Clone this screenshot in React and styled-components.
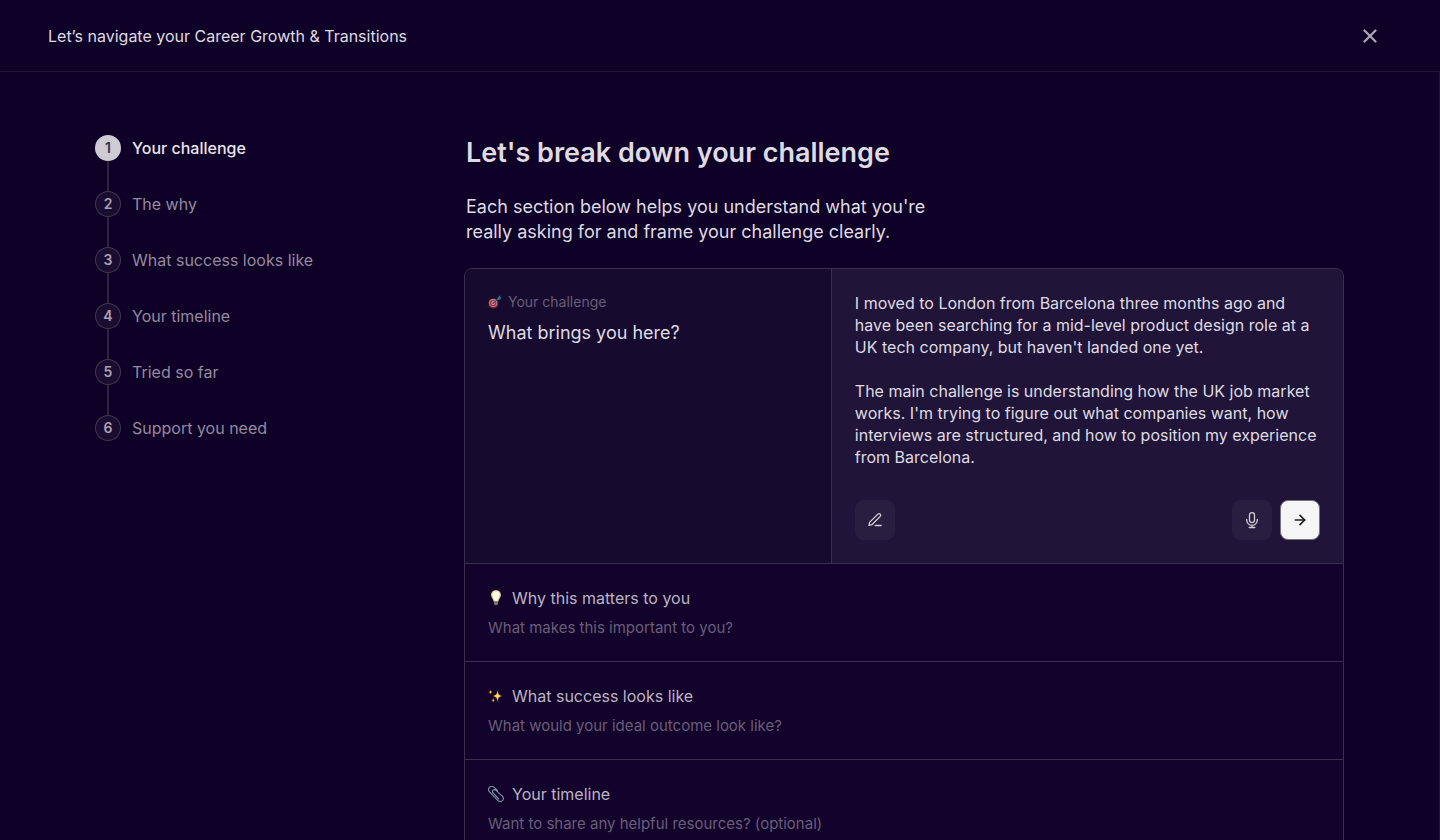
import React, { useState } from "react";

import styled, { createGlobalStyle } from "styled-components";

import { ArrowRight, X } from "lucide-react";

const steps = ["Your challenge", "The why", "What success looks like", "Your timeline", "Tried so far", "Support you need"]

const startingAnswer = `I moved to London from Barcelona three months ago and have been searching for a mid-level product design role at a UK tech company, but haven't landed one yet.

The main challenge is understanding how the UK job market works. I'm trying to figure out what companies want, how interviews are structured, and how to position my experience from Barcelona.`

const GlobalStyle = createGlobalStyle`
  :root {
    --night: #0f0027;
    --line: #1f1338;
    --cardLine: #3a2f51;
    --text: #dfdbe3;
    --muted: #938b9f;
    --faint: #695e79;
  }

  * {
    box-sizing: border-box;
  }

  body {
    margin: 0;
    background: var(--night);
    color: var(--text);
    font-family: Inter, "Liberation Sans", sans-serif;
    font-size: 16px;
    line-height: 22px;
  }

  button, textarea {
    font: inherit;
    color: inherit;
  }

  h1, h2, p, ol {
    margin: 0;
    padding: 0;
  }
`

const Shell = styled.div`
  display: flex;
  flex-direction: column;
  height: 100vh;
`

const Header = styled.header`
  display: flex;
  align-items: center;
  justify-content: space-between;
  flex: none;
  padding: 20px 54px 19px 48px;
  border-bottom: 1px solid var(--line);
`

const CloseButton = styled.button`
  display: grid;
  place-items: center;
  width: 32px;
  height: 32px;
  padding: 0;
  border: 0;
  background: none;
  color: #aca5b5;
  cursor: pointer;
`

const Main = styled.main`
  display: grid;
  grid-template-columns: 272px minmax(0, 1fr);
  gap: 96px;
  flex: 1;
  min-height: 0;
  padding: 64px 95px 0 96px;
  border-right: 1px solid var(--line);
  overflow-y: auto;
  scrollbar-width: none;
`

const StepList = styled.ol`
  list-style: none;
`

const Step = styled.li`
  display: flex;
  flex-direction: column;

  &:not(:last-child)::after {
    content: "";
    width: 2px;
    height: 30px;
    margin: 1px 11px;
    background: #2f2440;
  }
`

const StepLink = styled.a`
  display: flex;
  align-items: center;
  gap: 12px;
  color: ${({ $current }) => ($current ? "#e8e5eb" : "var(--muted)")};
  font-weight: ${({ $current }) => ($current ? 500 : 400)};
  line-height: 24px;
  text-decoration: none;
`

const StepNumber = styled.span`
  width: 24px;
  height: 24px;
  border-radius: 50%;
  background: ${({ $current }) => ($current ? "#cfcbd4" : "#1b0c32")};
  box-shadow: 0 0 0 1px ${({ $current }) => ($current ? "#cfcbd4" : "#40394a")};
  color: ${({ $current }) => ($current ? "#39333f" : "#a9a2b2")};
  font-size: 14px;
  font-weight: 600;
  text-align: center;
`

const Intro = styled.div`
  padding: 0 2px 24px;

  h1 {
    font-size: 27px;
    font-weight: 600;
    line-height: 34px;
  }

  p {
    max-width: 480px;
    margin-top: 24px;
    font-size: 18px;
    line-height: 25px;
  }
`

const Card = styled.section`
  border: 1px solid var(--cardLine);
  border-radius: 8px;
  background: #13022b;
  overflow: hidden;
`

const OpenSection = styled.div`
  display: grid;
  grid-template-columns: 5fr 7fr;
`

const Prompt = styled.div`
  display: flex;
  flex-direction: column;
  gap: 9px;
  padding: 23px;
  background: #160a2e;

  label {
    font-size: 18px;
    line-height: 24px;
  }
`

const PromptTopic = styled.p`
  display: flex;
  align-items: center;
  gap: 6px;
  color: var(--faint);
  font-size: 14px;
  line-height: 20px;
`

const Answer = styled.div`
  display: flex;
  flex-direction: column;
  gap: 32px;
  padding: 23px;
  border-left: 1px solid var(--cardLine);
  background: #201438;

  textarea {
    display: block;
    width: 100%;
    padding: 0;
    border: 0;
    outline: 0;
    background: none;
    resize: none;
    overflow: hidden;
  }
`

const Tools = styled.div`
  display: flex;
  gap: 8px;

  button:first-child {
    margin-right: auto;
  }
`

const ToolButton = styled.button`
  display: grid;
  place-items: center;
  width: 40px;
  height: 40px;
  padding: 0;
  border: 1px solid ${({ $primary }) => ($primary ? "#77717b" : "#291d40")};
  border-radius: 8px;
  background: ${({ $primary }) => ($primary ? "#f5f5f5" : "#291d40")};
  color: ${({ $primary }) => ($primary ? "#1c1c1c" : "#d5d0da")};
  cursor: pointer;
`

const ClosedSection = styled.button`
  display: flex;
  flex-direction: column;
  gap: 9px;
  width: 100%;
  padding: 23px;
  border: 0;
  border-top: 1px solid var(--cardLine);
  background: none;
  text-align: left;
  cursor: pointer;
`

const SectionTitle = styled.span`
  display: flex;
  align-items: center;
  gap: 8px;
  color: #bbb5c3;
`

const SectionHint = styled.span`
  color: var(--faint);
  font-size: 15px;
  line-height: 20px;
`

const PenIcon = () => (
  <svg width="18" height="18" viewBox="0 0 18 18" fill="none" stroke="currentColor" strokeWidth="1.3" strokeLinecap="round" strokeLinejoin="round" aria-hidden="true">
    <path d="M3 14.400 3.600 11.400 11.900 3.100a1.600 1.600 0 0 1 2.300 2.300L5.900 13.700z" />
    <path d="M9.200 14.500h6" />
  </svg>
)

const MicIcon = () => (
  <svg width="18" height="18" viewBox="0 0 18 18" fill="none" stroke="currentColor" strokeWidth="1.300" strokeLinecap="round" aria-hidden="true">
    <rect x="6.500" y="1.600" width="5" height="10" rx="2.500" />
    <path d="M3.700 8.400v.7a5.300 5.300 0 0 0 10.600 0v-.7M9 14.500v2M6.200 16.500h5.600" />
  </svg>
)

const TargetIcon = () => (
  <svg width="14" height="14" viewBox="0 0 14 14" aria-hidden="true">
    <circle cx="5.500" cy="8.500" r="5" fill="#8b1d2c" />
    <circle cx="5.200" cy="8.100" r="4" fill="#a893a0" />
    <circle cx="5.200" cy="8.100" r="3.200" fill="#ad2436" />
    <circle cx="5.200" cy="8.100" r="2" fill="#b9a3ae" />
    <circle cx="5.200" cy="8.100" r="1" fill="#a31f30" />
    <path d="M5.200 8.100 10 4.200" stroke="#344b5c" strokeWidth="1" />
    <path d="m9 5 1-2.700 2.400-2-.2 2 1.700.3-2.100 2.200z" fill="#29788a" />
  </svg>
)

const BulbIcon = () => (
  <svg width="16" height="16" viewBox="0 0 16 16" aria-hidden="true">
    <path d="M8 .300c-2.800 0-4.900 2-4.900 4.700 0 2.600 2.200 3.800 2.600 6.400h4.600c.4-2.600 2.600-3.800 2.600-6.400C12.900 2.300 10.800.300 8 .300z" fill="#f2d795" />
    <path d="M8 1.200c-2.100 0-3.500 1.500-3.500 3.500 0 2.200 1.600 3.600 2.200 6.100h2.600c.6-2.500 2.200-3.900 2.200-6.100 0-2-1.400-3.500-3.500-3.500z" fill="#fffbea" />
    <path d="M6.100 11.200h3.800v2.400c0 1-.8 1.700-1.900 1.700s-1.900-.7-1.900-1.700z" fill="#8d887c" />
    <path d="M6.200 12.500h3.600M6.400 14h3.200" stroke="#5c5850" strokeWidth=".6" />
  </svg>
)

const SparklesIcon = () => (
  <svg width="16" height="16" viewBox="0 0 16 16" aria-hidden="true">
    <path d="M9.500 1.800c.5 4.300 1 5.400 5 6.200-4 .8-4.500 1.900-5 6.200-.5-4.300-1-5.400-5-6.200 4-.8 4.500-1.900 5-6.200z" fill="#fcc42d" />
    <path d="M9.500 5c.3 2 .7 2.600 2.500 3-1.800.4-2.200 1-2.500 3-.3-2-.7-2.600-2.500-3 1.800-.4 2.200-1 2.500-3z" fill="#ffe36b" />
    <path d="M2.500 1.400c.3 1.900.7 2.300 2.300 2.600-1.600.3-2 .7-2.300 2.600C2.200 4.700 1.800 4.300.2 4c1.600-.3 2-.7 2.300-2.600zM5.200 9.900c.3 1.800.6 2.100 2.100 2.400-1.500.3-1.800.7-2.100 2.400-.3-1.700-.6-2.100-2.100-2.400 1.500-.3 1.800-.6 2.100-2.400z" fill="#f5b52a" />
  </svg>
)

const ClipIcon = () => (
  <svg width="16" height="16" viewBox="0 0 16 16" fill="none" strokeLinecap="round" aria-hidden="true">
    <path d="M9.400 4.300 6.200 1.400C4.700 0 2.700.100 1.500 1.300s-1.300 3 .1 4.500l8.100 8.500c1.500 1.500 3.400 1.500 4.700.3 1.200-1.200 1.300-3-.1-4.500L8 4.400C7 3.400 5.700 3.500 5 4.200s-.8 1.800.1 2.800l5.700 6" stroke="#8195a8" strokeWidth="1.100" />
  </svg>
)

const closedSections = [
  { title: "Why this matters to you", hint: "What makes this important to you?", Icon: BulbIcon },
  { title: "What success looks like", hint: "What would your ideal outcome look like?", Icon: SparklesIcon },
  { title: "Your timeline", hint: "Want to share any helpful resources? (optional)", Icon: ClipIcon },
]

export default function App(){
  const [answer, setAnswer] = useState(startingAnswer)

  return (
    <Shell>
      <GlobalStyle />
      <Header>
        <p>Let’s navigate your Career Growth & Transitions</p>
        <CloseButton type="button" aria-label="Close">
          <X size={22} strokeWidth={2.5} />
        </CloseButton>
      </Header>
      <Main>
        <nav aria-label="Progress">
          <StepList>
            {steps.map((step, index) => (
              <Step key={step}>
                <StepLink href={`#step-${index + 1}`} $current={index === 0} aria-current={index === 0 ? "step" : undefined}>
                  <StepNumber $current={index === 0}>{index + 1}</StepNumber>
                  {step}
                </StepLink>
              </Step>
            ))}
          </StepList>
        </nav>
        <div>
          <Intro>
            <h1>Let's break down your challenge</h1>
            <p>Each section below helps you understand what you're really asking for and frame your challenge clearly.</p>
          </Intro>
          <Card>
            <OpenSection>
              <Prompt>
                <PromptTopic><TargetIcon />Your challenge</PromptTopic>
                <label htmlFor="challenge">What brings you here?</label>
              </Prompt>
              <Answer>
                <textarea
                id="challenge"
                rows={8}
                spellCheck={false}
                value={answer}
                onChange={(e) => setAnswer(e.target.value)} />
                <Tools>
                  <ToolButton type="button" aria-label="Edit"><PenIcon /></ToolButton>
                  <ToolButton type="button" aria-label="Dictate"><MicIcon /></ToolButton>
                  <ToolButton type="button" aria-label="Next" $primary><ArrowRight size={16} strokeWidth={2.5} /></ToolButton>
                </Tools>
              </Answer>
            </OpenSection>
            {closedSections.map(({ title, hint, Icon }) => (
              <ClosedSection type="button" key={title}>
                <SectionTitle><Icon />{title}</SectionTitle>
                <SectionHint>{hint}</SectionHint>
              </ClosedSection>
            ))}
          </Card>
        </div>
      </Main>
    </Shell>
  )
}
